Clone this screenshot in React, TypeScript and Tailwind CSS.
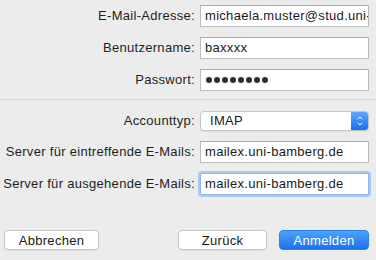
import { ChevronDown, ChevronUp } from 'lucide-react';

function Row({ label, children }: { label: string; children: React.ReactNode }) {
  return (
    <div className="flex items-center">
      <label className="w-[200px] shrink-0 whitespace-nowrap pr-[5px] text-right text-[13px] text-[#1e1e1e]">
        {label}
      </label>
      {children}
    </div>
  );
}

function Field({ value, focused = false, dots = false }: { value: string; focused?: boolean; dots?: boolean }) {
  return (
    <div
      className={`flex h-[22px] w-[169px] shrink-0 items-center overflow-hidden whitespace-nowrap bg-white pl-[4px] text-[13px] text-[#1a1a1a] ${
        focused
          ? 'rounded-[2px] border border-[#8fb9ee] ring-[2px] ring-[#a9c9f3]'
          : 'border border-[#bcbcbc] border-t-[#a8a8a8]'
      }`}
    >
      {dots ? (
        <span className="flex gap-[2px] pl-[1px]">
          {Array.from({ length: 8 }).map((_, i) => (
            <span key={i} className="h-[6px] w-[6px] rounded-full bg-[#2e2e2e]" />
          ))}
        </span>
      ) : (
        value
      )}
    </div>
  );
}

export default function App() {
  return (
    <div
      className="flex h-[260px] w-[376px] flex-col overflow-hidden bg-[#ececec] pt-[5px] tracking-[0.3px]"
      style={{ fontFamily: '"Liberation Sans", Arial, sans-serif' }}
    >
      <div className="flex flex-col gap-[10px]">
        <Row label="E-Mail-Adresse:">
          <Field value="michaela.muster@stud.uni-bamberg.de" />
        </Row>
        <Row label="Benutzername:">
          <Field value="baxxxx" />
        </Row>
        <Row label="Passwort:">
          <Field value="" dots />
        </Row>
      </div>

      <div className="mt-[8px] h-px bg-[#d4d4d4]" />

      <div className="mt-[11px] flex flex-col gap-[10px]">
        <Row label="Accounttyp:">
          <div className="flex h-[20px] w-[169px] shrink-0 items-stretch overflow-hidden rounded-[4px] border border-[#c4c4c4] bg-white text-[13px] text-[#1a1a1a] shadow-[0_1px_0_rgba(0,0,0,0.05)]">
            <span className="flex flex-1 items-center pl-[9px]">IMAP</span>
            <span className="flex w-[17px] flex-col items-center justify-center bg-gradient-to-b from-[#5ca8fa] to-[#1b6ff0] text-white">
              <ChevronUp size={8} strokeWidth={3} className="-mb-[1px]" />
              <ChevronDown size={8} strokeWidth={3} className="-mt-[1px]" />
            </span>
          </div>
        </Row>
        <Row label="Server für eintreffende E-Mails:">
          <Field value="mailex.uni-bamberg.de" />
        </Row>
        <Row label="Server für ausgehende E-Mails:">
          <Field value="mailex.uni-bamberg.de" focused />
        </Row>
      </div>

      <div className="mt-[35px] flex items-center pl-[4px] pr-[7px] text-[13px]">
        <button className="h-[20px] w-[95px] rounded-[4px] border border-[#c6c6c6] bg-white text-[#1a1a1a] shadow-[0_1px_0_rgba(0,0,0,0.06)]">
          Abbrechen
        </button>
        <div className="flex-1" />
        <button className="h-[20px] w-[89px] rounded-[4px] border border-[#c6c6c6] bg-white text-[#1a1a1a] shadow-[0_1px_0_rgba(0,0,0,0.06)]">
          Zurück
        </button>
        <button className="ml-[12px] h-[20px] w-[90px] rounded-[4px] border border-[#2a7ff0] bg-gradient-to-b from-[#4da2fb] to-[#1c72ef] text-white">
          Anmelden
        </button>
      </div>
    </div>
  );
}
